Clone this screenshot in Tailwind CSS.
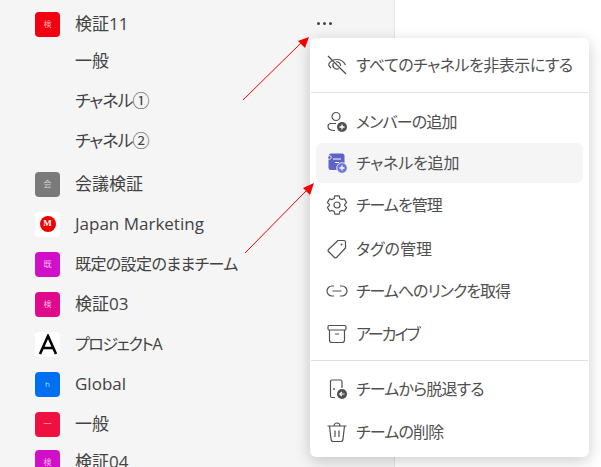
<!DOCTYPE html>
<html lang="ja">
<head>
<meta charset="UTF-8">
<title>Teams menu</title>
<script src="https://cdn.jsdelivr.net/npm/@tailwindcss/browser@4"></script>
</head>
<body class="bg-white overflow-hidden font-['Open_Sans','Noto_Sans_CJK_JP',sans-serif] text-[#424242] [font-feature-settings:'palt']">
<div class="relative w-[601px] h-[467px] overflow-hidden">

  <!-- team list -->
  <div class="w-[395px] h-[467px] bg-[#f5f5f5] border-r border-[#e6e6e6] pl-[35px] pt-[4px] text-[17px] whitespace-nowrap overflow-hidden">
    <div class="flex items-center h-[40px] gap-[15px] relative">
      <div class="w-[25px] h-[25px] rounded-[4px] bg-[#f00010] text-[#ffb0b0] text-[8px] flex items-center justify-center">検</div>
      <span>検証11</span>
      <div class="absolute left-[282px] top-[18px] flex gap-[3px]">
        <i class="block w-[3px] h-[3px] rounded-full bg-[#424242]"></i><i class="block w-[3px] h-[3px] rounded-full bg-[#424242]"></i><i class="block w-[3px] h-[3px] rounded-full bg-[#424242]"></i>
      </div>
    </div>
    <div class="flex items-center h-[40px] pl-[40px] -mt-[3px]">一般</div>
    <div class="flex items-center h-[40px] pl-[40px] tracking-[-1px]">チャネル①</div>
    <div class="flex items-center h-[40px] pl-[40px] tracking-[-1px]">チャネル②</div>
    <div class="flex items-center h-[40px] gap-[15px] mt-[3px]">
      <div class="w-[25px] h-[25px] rounded-[4px] bg-[#7a7a7a] text-[#d8d8d8] text-[8px] flex items-center justify-center">会</div>
      <span>会議検証</span>
    </div>
    <div class="flex items-center h-[40px] gap-[15px]">
      <div class="w-[25px] h-[25px] rounded-[4px] bg-white flex items-center justify-center">
        <div class="w-[16px] h-[16px] rounded-full bg-[#f00000] text-white text-[9px] font-bold flex items-center justify-center font-['Liberation_Serif',serif]">M</div>
      </div>
      <span>Japan Marketing</span>
    </div>
    <div class="flex items-center h-[40px] gap-[15px]">
      <div class="w-[25px] h-[25px] rounded-[4px] bg-[#d010c8] text-[#f4b4ee] text-[8px] flex items-center justify-center">既</div>
      <span class="text-[16px] tracking-[-0.6px]">既定の設定のままチーム</span>
    </div>
    <div class="flex items-center h-[40px] gap-[15px]">
      <div class="w-[25px] h-[25px] rounded-[4px] bg-[#e0088c] text-[#f8b8dc] text-[8px] flex items-center justify-center">検</div>
      <span>検証03</span>
    </div>
    <div class="flex items-center h-[40px] gap-[15px]">
      <div class="w-[25px] h-[25px] rounded-[4px] bg-white flex items-center justify-center">
        <svg width="20" height="21" viewBox="0 0 20 21" fill="none" stroke="#000" stroke-width="2.6"><path d="M2 20 L10 2 L18 20 M5 14 H15"/></svg>
      </div>
      <span class="text-[16px] tracking-[-1.4px]">プロジェクトA</span>
    </div>
    <div class="flex items-center h-[40px] gap-[15px]">
      <div class="w-[25px] h-[25px] rounded-[4px] bg-[#0070f0] text-[#b8d8ff] text-[8px] flex items-center justify-center">h</div>
      <span>Global</span>
    </div>
    <div class="flex items-center h-[40px] gap-[15px]">
      <div class="w-[25px] h-[25px] rounded-[4px] bg-[#f01040] text-[#ffb8c8] text-[8px] flex items-center justify-center">一</div>
      <span>一般</span>
    </div>
    <div class="flex items-center h-[40px] gap-[15px] -mt-[2px]">
      <div class="w-[25px] h-[25px] rounded-[4px] bg-[#d010c8] text-[#f4b4ee] text-[8px] flex items-center justify-center">検</div>
      <span>検証04</span>
    </div>
  </div>

  <!-- context menu -->
  <div class="absolute left-[310px] top-[38px] w-[279px] h-[419px] bg-white rounded-[6px] shadow-[0_4px_16px_rgba(0,0,0,0.2)] text-[16px] text-[#505050] whitespace-nowrap">
    <div class="flex items-center h-[42px] mx-[6px] px-[10px] gap-[8px] absolute top-[6px] left-0 right-0">
      <svg class="shrink-0" width="22" height="22" viewBox="0 0 22 22" fill="none" stroke="#505050" stroke-width="1.2"><path d="M2 2 L20 20"/><path d="M2.5 10.5 C4 7.5 6.5 5.5 11 5.5 C15.5 5.5 18 8 19.5 11"/><path d="M7.5 9 A4 4 0 0 0 13 14.5"/><path d="M10 7.8 A4 4 0 0 1 14.6 12"/><path d="M2.5 10.5 C3 12 4 13 5 14"/></svg>
      <span class="tracking-[-0.5px]">すべてのチャネルを非表示にする</span>
    </div>
    <div class="absolute top-[54px] left-[1px] right-[1px] h-px bg-[#e0e0e0]"></div>

    <div class="absolute top-[63px] left-[6px] right-[6px]">
      <div class="flex items-center h-[42px] px-[10px] gap-[8px]">
        <svg class="shrink-0" width="22" height="22" viewBox="0 0 22 22" fill="none" stroke="#505050" stroke-width="1.2"><circle cx="10" cy="5.5" r="4"/><path d="M10 12.5 H5 A3 3 0 0 0 2 15.5 C2 18 5 19.5 9 19.5"/><circle cx="16" cy="16" r="5" fill="#505050" stroke="none"/><path d="M16 13.5 V18.5 M13.5 16 H18.5" stroke="#fff" stroke-width="1.3"/></svg>
        <span class="tracking-[-0.85px]">メンバーの追加</span>
      </div>
      <div class="flex items-center h-[40px] px-[10px] gap-[8px] bg-[#f5f5f5] rounded-[6px]">
        <svg class="shrink-0" width="22" height="22" viewBox="0 0 22 22" fill="none"><path d="M3 3.5 A2 2 0 0 1 5 1.5 H16 A2.5 2.5 0 0 1 18.5 4 V12 L12 18 H5 A2.5 2.5 0 0 1 2.5 15.5 V3.5 Z" fill="#5f63c8"/><circle cx="3.5" cy="5.5" r="1.8" fill="#5f63c8" stroke="#fff" stroke-width="0.8"/><path d="M7 7 H15 M9 10.5 H13" stroke="#fff" stroke-width="1.2"/><circle cx="16" cy="16" r="5.3" fill="#6f74d8" stroke="#fff" stroke-width="0.8"/><path d="M16 13.5 V18.5 M13.5 16 H18.5" stroke="#fff" stroke-width="1.3"/></svg>
        <span class="tracking-[-0.2px]">チャネルを追加</span>
      </div>
      <div class="flex items-center h-[44px] px-[10px] gap-[8px]">
        <svg class="shrink-0" width="22" height="22" viewBox="0 0 22 22" fill="none" stroke="#505050" stroke-width="1.2"><circle cx="11" cy="11" r="3"/><path d="M8.8 1.8 H13.2 L13.8 4.4 L15.9 5.6 L18.4 4.8 L20.6 8.6 L18.7 10.4 V11.6 L20.6 13.4 L18.4 17.2 L15.9 16.4 L13.8 17.6 L13.2 20.2 H8.8 L8.2 17.6 L6.1 16.4 L3.6 17.2 L1.4 13.4 L3.3 11.6 V10.4 L1.4 8.6 L3.6 4.8 L6.1 5.6 L8.2 4.4 Z" stroke-linejoin="round"/></svg>
        <span class="tracking-[-1px]">チームを管理</span>
      </div>
      <div class="flex items-center h-[43px] px-[10px] gap-[8px]">
        <svg class="shrink-0" width="22" height="22" viewBox="0 0 22 22" fill="none" stroke="#505050" stroke-width="1.2"><path d="M12 2.5 H18 A1.5 1.5 0 0 1 19.5 4 V10 L10.5 19.5 A1.5 1.5 0 0 1 8.5 19.5 L2.5 13.5 A1.5 1.5 0 0 1 2.5 11.5 Z" stroke-linejoin="round"/><circle cx="15.5" cy="6.5" r="1" fill="#505050" stroke="none"/></svg>
        <span>タグの管理</span>
      </div>
      <div class="flex items-center h-[42px] px-[10px] gap-[8px]">
        <svg class="shrink-0" width="22" height="22" viewBox="0 0 22 22" fill="none" stroke="#505050" stroke-width="1.2"><path d="M8 6 H6 A5 5 0 0 0 6 16 H8 M14 6 H16 A5 5 0 0 1 16 16 H14 M6.5 11 H15.5"/></svg>
        <span class="tracking-[-1px]">チームへのリンクを取得</span>
      </div>
      <div class="flex items-center h-[43px] px-[10px] gap-[8px]">
        <svg class="shrink-0" width="22" height="22" viewBox="0 0 22 22" fill="none" stroke="#505050" stroke-width="1.2"><rect x="2" y="2.5" width="18" height="4.5" rx="1.2"/><path d="M3.5 7 V17 A2.5 2.5 0 0 0 6 19.5 H16 A2.5 2.5 0 0 0 18.5 17 V7 M9 11 H13"/></svg>
        <span class="tracking-[-2px]">アーカイブ</span>
      </div>
    </div>

    <div class="absolute top-[322px] left-[1px] right-[1px] h-px bg-[#e0e0e0]"></div>

    <div class="absolute top-[330px] left-[6px] right-[6px]">
      <div class="flex items-center h-[42px] px-[10px] gap-[8px]">
        <svg class="shrink-0" width="22" height="22" viewBox="0 0 22 22" fill="none" stroke="#505050" stroke-width="1.2"><path d="M9 19.5 H6 A1.5 1.5 0 0 1 4.5 18 V3.5 A1.5 1.5 0 0 1 6 2 H14.5 A1.5 1.5 0 0 1 16 3.5 V10"/><circle cx="8" cy="11" r="0.9" fill="#505050" stroke="none"/><circle cx="16" cy="16" r="5" fill="#505050" stroke="none"/><path d="M18.5 16 H13.8 M15.8 14 L13.8 16 L15.8 18" stroke="#fff" stroke-width="1.2"/></svg>
        <span class="tracking-[-0.8px]">チームから脱退する</span>
      </div>
      <div class="flex items-center h-[43px] px-[10px] gap-[8px]">
        <svg class="shrink-0" width="22" height="22" viewBox="0 0 22 22" fill="none" stroke="#505050" stroke-width="1.2"><path d="M1.5 5 H20.5 M8 5 A3 3 0 0 1 14 5 M3.5 5 L5 18 A2.5 2.5 0 0 0 7.5 20.5 H14.5 A2.5 2.5 0 0 0 17 18 L18.5 5 M9 9.5 V16 M13 9.5 V16"/></svg>
        <span class="tracking-[-0.8px]">チームの削除</span>
      </div>
    </div>
  </div>

  <!-- annotation arrows -->
  <svg class="absolute left-0 top-0 pointer-events-none" width="601" height="467" fill="none">
    <path d="M243 100 L302 42" stroke="#f00000" stroke-width="1"/>
    <path d="M309 37 L298 41 L305 48 Z" fill="#f00000"/>
    <path d="M245 253 L308 189" stroke="#f00000" stroke-width="1"/>
    <path d="M314 183 L303 188 L310 195 Z" fill="#f00000"/>
  </svg>
</div>
</body>
</html>
